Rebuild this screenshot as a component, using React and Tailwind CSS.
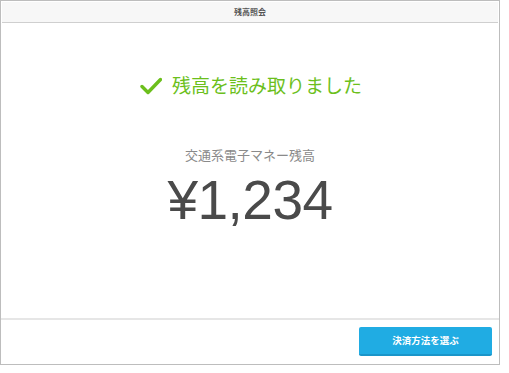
import React from "react";

export default function App() {
  return (
    <div className="w-[509px] h-[373px] bg-white" style={{ fontFamily: '"Noto Sans CJK JP", "Liberation Sans", sans-serif' }}>
      <div className="w-[500px] h-[365px] border border-[#bdbdbd] flex flex-col bg-white">
        <div className="h-[21px] mx-[1px] mt-[1px] bg-[#f7f7f7] border-b border-[#cfcfcf] flex items-center justify-center">
          <span className="text-[8px] font-bold text-[#555] leading-none">残高照会</span>
        </div>
        <div className="flex-1 flex flex-col items-center">
          <div className="mt-[49px] flex items-center gap-[10px] ml-[2px]">
            <svg width="22" height="18" viewBox="0 0 22 18" className="mt-[1px]">
              <path d="M2 9.5 L8 15.5 L20.5 2.5" fill="none" stroke="#6cbf1c" strokeWidth="3.4" strokeLinecap="round" strokeLinejoin="round" />
            </svg>
            <span className="text-[19px] leading-[26px] text-[#6cbf1c]">残高を読み取りました</span>
          </div>
          <div className="mt-[48px] text-[13px] leading-[18px] text-[#8a8a8a]">交通系電子マネー残高</div>
          <div
            className="mt-[6px] text-[55px] leading-[60px] text-[#4a4a4a] -tracking-[0.5px]"
            style={{ fontFamily: '"Liberation Sans", Arial, sans-serif' }}
          >
            ¥1,234
          </div>
        </div>
        <div className="h-[2px] bg-[#e6e6e6]" />
        <div className="h-[44px] flex items-start justify-end pr-[7px] pt-[7px]">
          <button className="w-[133px] h-[29px] bg-[#20ace3] border-b-2 border-[#1a95c9] rounded-[2px] text-white text-[9.5px] font-bold flex items-center justify-center">
            決済方法を選ぶ
          </button>
        </div>
      </div>
    </div>
  );
}
